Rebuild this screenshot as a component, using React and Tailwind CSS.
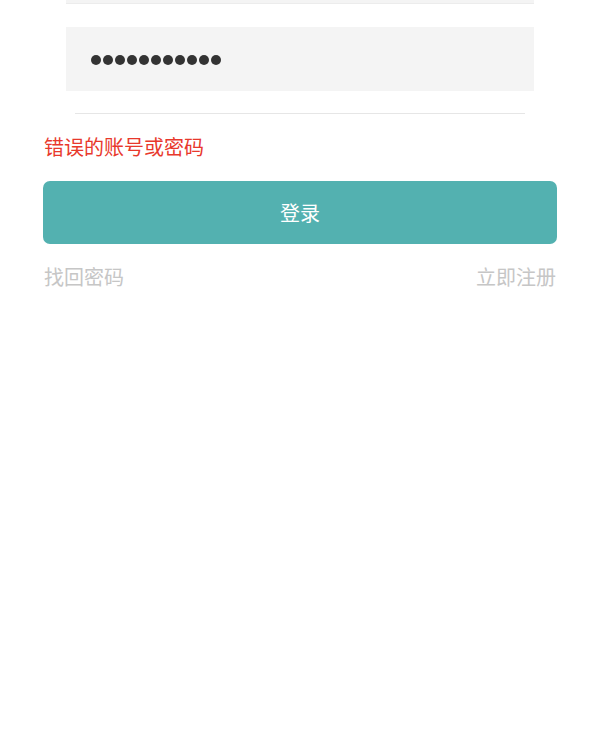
export default function App() {
  const dots = Array.from({ length: 11 });
  return (
    <div
      className="w-[600px] h-[747px] bg-white overflow-hidden"
      style={{ fontFamily: '"Noto Sans CJK SC", "Noto Sans", sans-serif' }}
    >
      {/* Fields */}
      <div className="px-[66px]">
        <div className="h-[4px] bg-[#f4f4f4] border-b border-[#ececec]" />
        <div className="mt-[23px] h-[64px] bg-[#f4f4f4] flex items-center pl-[25px]">
          <div className="flex gap-[2px] pt-[2px]" aria-label="password">
            {dots.map((_, i) => (
              <span key={i} className="w-[10px] h-[10px] rounded-full bg-[#333333]" />
            ))}
          </div>
        </div>
        <div className="mt-[22px] mx-[9px] h-px bg-[#e6e6e6]" />
      </div>

      {/* Error + button */}
      <div className="px-[43px] pt-[19px]">
        <p className="text-[20px] leading-[28px] text-[#e8382c] pl-px">错误的账号或密码</p>
        <button className="mt-[20px] w-full h-[63px] rounded-[7px] bg-[#53b1b0] text-white text-[20px]">
          登录
        </button>
        <div className="mt-[19px] flex justify-between text-[20px] leading-[28px] text-[#c6c6c6]">
          <span className="pl-px">找回密码</span>
          <span className="pr-px">立即注册</span>
        </div>
      </div>
    </div>
  );
}
